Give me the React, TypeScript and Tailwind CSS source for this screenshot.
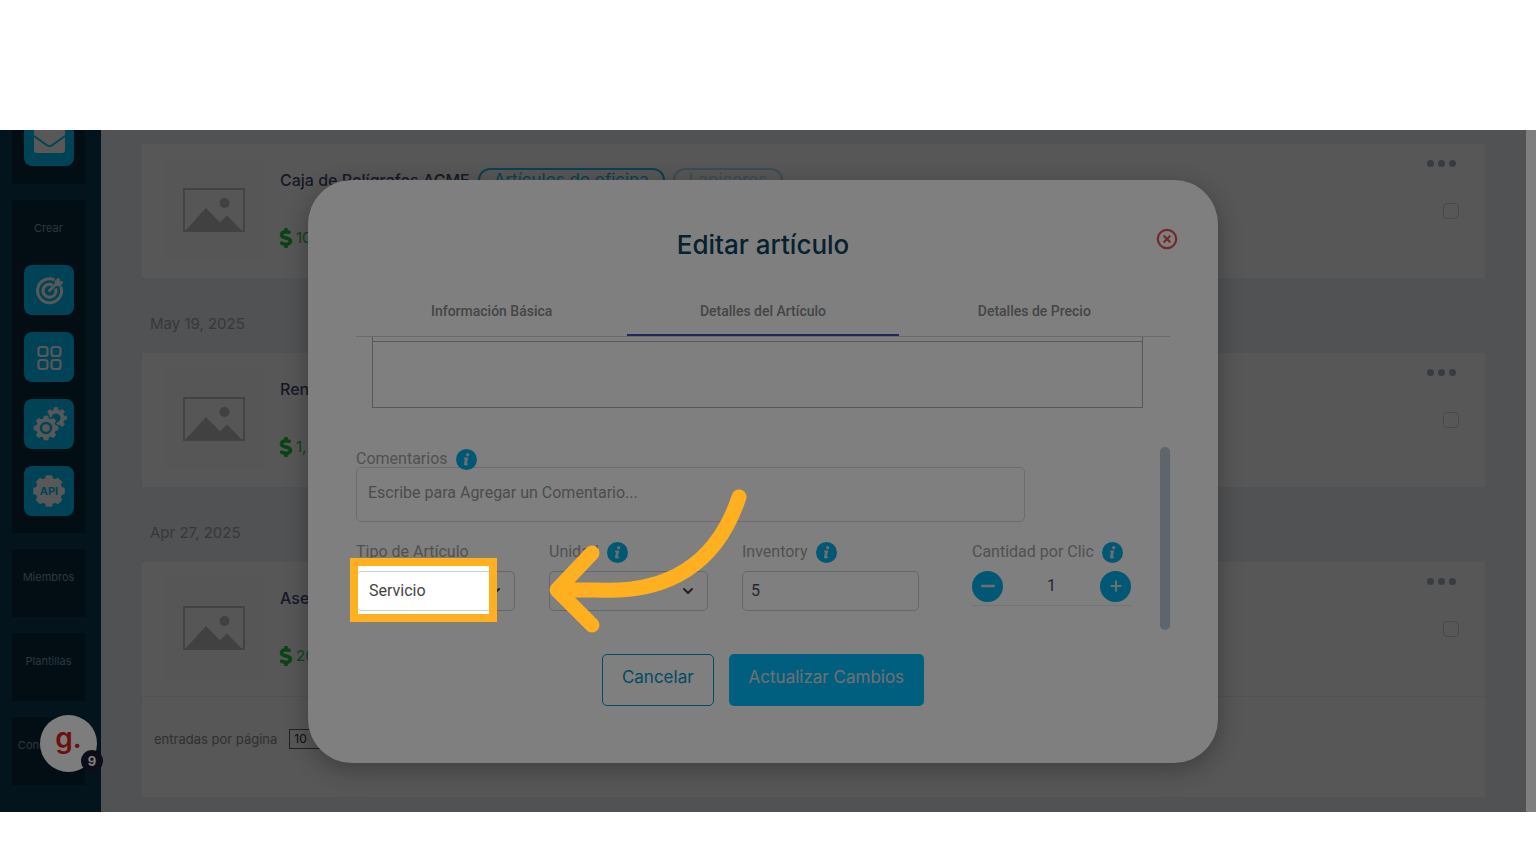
import type { ReactNode } from "react";
import { FaDollarSign } from "react-icons/fa6";
import { ChevronDown, CircleX, Minus, Plus } from "lucide-react";

// Outline of a cog: flat teeth around a body of radius r1
function cogPath(cx: number, cy: number, r1: number, r2: number, teeth: number) {
  const step = (Math.PI * 2) / teeth;
  const points: string[] = [];
  for (let i = 0; i < teeth; i++) {
    const a = i * step - Math.PI / 2;
    const corners = [
      [r1, -0.3],
      [r2, -0.2],
      [r2, 0.2],
      [r1, 0.3],
    ];
    for (const [r, k] of corners) {
      const t = a + k * step;
      points.push(`${(cx + r * Math.cos(t)).toFixed(2)} ${(cy + r * Math.sin(t)).toFixed(2)}`);
    }
  }
  return `M${points.join("L")}Z`;
}

function MailIcon() {
  return (
    <svg viewBox="0 0 50 50" className="size-full">
      <rect x="10" y="12" width="31" height="25" rx="3" fill="#b0b0b0" />
      <path d="M10 20l12.500 9q3 2.200 6 0l12.500-9" fill="none" stroke="#0086ad" strokeWidth="1.800" />
    </svg>
  );
}

function TargetIcon() {
  return (
    <svg viewBox="0 0 50 50" className="size-full" fill="none" stroke="#b0b0b0" strokeWidth="3">
      <path d="M30.500 14.800A12 12 0 1 0 36.800 21.500" />
      <path d="M28.500 20A6.500 6.500 0 1 0 31.600 23.500" />
      <path d="M25.500 25.500L34 17" strokeLinecap="round" />
      <path d="M31 16l4-3 .5 3.500 3.500.5-3 4-4-.5z" fill="#b0b0b0" strokeWidth="1" />
    </svg>
  );
}

function GridIcon() {
  return (
    <svg viewBox="0 0 50 50" className="size-full" fill="none" stroke="#b0b0b0" strokeWidth="2.200">
      <rect x="14.500" y="15" width="9" height="9" rx="2.500" />
      <rect x="27.500" y="15" width="9" height="9" rx="2.500" />
      <rect x="14.500" y="28" width="9" height="9" rx="2.500" />
      <rect x="27.500" y="28" width="9" height="9" rx="2.500" />
    </svg>
  );
}

function CogsIcon() {
  return (
    <svg viewBox="0 0 50 50" className="size-full" strokeLinejoin="round">
      <path d={cogPath(32, 19, 8, 10.5, 8)} fill="#b0b0b0" stroke="#b0b0b0" />
      <circle cx="32" cy="19" r="4.500" fill="#0086ad" />
      <path d={cogPath(22, 29, 10, 12.5, 8)} fill="#b0b0b0" stroke="#0086ad" strokeWidth="3" />
      <path d={cogPath(22, 29, 9.5, 12, 8)} fill="#b0b0b0" stroke="#b0b0b0" />
      <circle cx="22" cy="29" r="5" fill="#b0b0b0" stroke="#0086ad" strokeWidth="2.500" />
    </svg>
  );
}

function ApiIcon() {
  return (
    <svg viewBox="0 0 50 50" className="size-full" strokeLinejoin="round">
      <path d={cogPath(25, 25, 12.5, 15, 8)} fill="#b0b0b0" stroke="#b0b0b0" strokeWidth="2" />
      <text x="25" y="29" textAnchor="middle" fontFamily="Inter, sans-serif" fontSize="11" fontWeight="700" fill="#0086ad">
        API
      </text>
    </svg>
  );
}

function PlaceholderImage() {
  return (
    <svg viewBox="0 0 62 44" className="h-11 w-[62px]">
      <rect x="1" y="1" width="60" height="42" fill="none" stroke="#828282" strokeWidth="1.800" />
      <circle cx="41.500" cy="15" r="5" fill="#828282" />
      <path d="M2 43L23 20l14 14.500 7-7L59 43z" fill="#828282" />
    </svg>
  );
}

function SideButton({ label, children }: { label: string; children: ReactNode }) {
  return (
    <button type="button" aria-label={label} className="size-[50px] shrink-0 overflow-hidden rounded-lg bg-[#0086ad]">
      {children}
    </button>
  );
}

function SidePanel({ title }: { title: string }) {
  return (
    <section className="h-[68px] shrink-0 bg-[#051d28] pt-5 text-center text-[11px] leading-4 text-[#587080]">
      {title}
    </section>
  );
}

function Sidebar() {
  return (
    <aside className="flex w-[101px] shrink-0 flex-col gap-4 overflow-hidden bg-[#07293b] pr-4 pl-3">
      <section className="-mt-4 flex shrink-0 flex-col items-center bg-[#051d28] pt-[2px] pb-[18px]">
        <SideButton label="Correo">
          <MailIcon />
        </SideButton>
      </section>
      <section className="flex shrink-0 flex-col items-center gap-[17px] bg-[#051d28] pt-5 pb-[17px]">
        <h2 className="mb-3 text-[11px] leading-4 text-[#587080]">Crear</h2>
        <SideButton label="Objetivos">
          <TargetIcon />
        </SideButton>
        <SideButton label="Categorías">
          <GridIcon />
        </SideButton>
        <SideButton label="Configuración">
          <CogsIcon />
        </SideButton>
        <SideButton label="API">
          <ApiIcon />
        </SideButton>
      </section>
      <SidePanel title="Miembros" />
      <SidePanel title="Plantillas" />
      <SidePanel title="Conexiones" />
    </aside>
  );
}

type ItemProps = {
  name: string;
  price: string;
  tags?: ReactNode;
};

function Item({ name, price, tags }: ItemProps) {
  return (
    <article className="flex h-[134px] pr-[26px] pl-[22px]">
      <div className="mt-4 flex size-[100px] items-center justify-center bg-[#acacac]">
        <PlaceholderImage />
      </div>
      <div className="ml-4 flex-1 pt-6">
        <div className="flex h-6 items-center gap-2">
          <h3 className="text-[16px] font-medium text-[#2c3350]">{name}</h3>
          {tags}
        </div>
        <p className="mt-[34px] flex items-center text-[15px] leading-6 text-[#18862a]">
          <FaDollarSign className="-ml-1 size-5" stroke="currentColor" strokeWidth={28} />
          {price}
        </p>
      </div>
      <div className="flex flex-col items-end">
        <button type="button" aria-label="Más opciones" className="mt-[15px] mr-[3px] flex h-2 items-center gap-1 text-[#6d7b83]">
          <span className="size-[7px] rounded-full bg-current" />
          <span className="size-[7px] rounded-full bg-current" />
          <span className="size-[7px] rounded-full bg-current" />
        </button>
        <input
          type="checkbox"
          aria-label={`Seleccionar ${name}`}
          className="mt-9 size-4 appearance-none rounded-sm border border-[#929292]"
        />
      </div>
    </article>
  );
}

function DateHeading({ children }: { children: ReactNode }) {
  return <h2 className="flex h-[75px] items-center pt-4 pl-2 text-[15px] leading-6 text-[#6d7276]">{children}</h2>;
}

function ItemList() {
  return (
    <main className="min-w-0 flex-1 bg-[#a0a4a6] pt-[14px] pr-[41px] pl-[41px]">
      <div className="bg-[#aeaeae]">
        <Item
          name="Caja de Polígrafos ACME"
          price="10.00"
          tags={
            <>
              <span className="rounded-full border-2 border-[#1a7f9e] px-[14px] text-[17px] leading-5 text-[#1a7f9e]">
                Artículos de oficina
              </span>
              <span className="rounded-full border-2 border-[#7898a8] px-[14px] text-[17px] leading-5 text-[#7898a8]">
                Lapiceros
              </span>
            </>
          }
        />
      </div>
      <DateHeading>May 19, 2025</DateHeading>
      <div className="bg-[#aeaeae]">
        <Item name="Renta" price="1,200.00" />
      </div>
      <DateHeading>Apr 27, 2025</DateHeading>
      <div className="bg-[#aeaeae]">
        <Item name="Asesoría" price="200.00" />
        <div className="flex h-[101px] items-start gap-3 border-t border-[#a4a4a4] pt-8 pl-3">
          <label htmlFor="page-size" className="text-[13px] leading-5 text-[#606060]">
            entradas por página
          </label>
          <select id="page-size" className="h-5 w-12 appearance-none border border-[#444] pl-1 text-[12px] text-[#222]">
            <option>10</option>
          </select>
        </div>
      </div>
    </main>
  );
}

function InfoIcon() {
  return (
    <svg viewBox="0 0 21 21" className="size-[21px] shrink-0" aria-hidden="true">
      <circle cx="10.500" cy="10.500" r="10.500" fill="#00b0e8" />
      <circle cx="11.700" cy="5.700" r="1.600" fill="#ddd" />
      <path d="M8.300 8.600h4l-1.500 6h1.400l-.4 1.500q-2 .6-3.200.2-.9-.4-.6-1.600l1-4.500H7.900z" fill="#ddd" />
    </svg>
  );
}

// Dims the whole stage around the highlighted control
function Spotlight() {
  return (
    <div className="pointer-events-none absolute -top-[13px] -left-[6px] z-40 h-16 w-[147px] shadow-[0_0_0_2000px_rgba(0,0,0,0.5)]">
      <div className="size-full border-8 border-[#ffb020]" />
      <svg viewBox="0 0 210 150" className="absolute -top-[72px] left-[196px] h-[150px] w-[210px]" fill="none">
        <path
          d="M193 11C171 78 122 108 50 104L11 104M46 67L11 104L46 139"
          stroke="#ffb020"
          strokeWidth="15"
          strokeLinecap="round"
          strokeLinejoin="round"
        />
      </svg>
    </div>
  );
}

const labelClass = "flex h-[21px] items-center gap-2 text-[16px] text-[#a2a2a2]";
const fieldClass = "h-10 w-full appearance-none rounded-[5px] border border-[#c4d2da] bg-transparent text-[16px]";

function EditDialog() {
  return (
    <div
      role="dialog"
      aria-labelledby="dialog-title"
      className="relative w-[910px] max-w-full rounded-[44px] bg-white px-12 pb-[57px] font-['Roboto',sans-serif] shadow-[0_6px_24px_rgba(0,0,0,0.3)]"
    >
      <h1 id="dialog-title" className="pt-[47px] text-center font-['Inter',sans-serif] text-[26px] leading-9 font-medium text-[#0c4260]">
        Editar artículo
      </h1>
      <button type="button" aria-label="Cerrar" className="absolute top-12 right-10 text-[#e8505a]">
        <CircleX className="size-[22px]" strokeWidth={2.4} />
      </button>

      <div role="tablist" className="mt-[25px] grid grid-cols-3 border-b border-[#d4d4d4] text-[14px] font-medium text-[#8a8a8a]">
        <button type="button" role="tab" className="h-12">
          Información Básica
        </button>
        <button type="button" role="tab" aria-selected="true" className="h-12 border-b-2 border-[#3f51b5] pt-[2px]">
          Detalles del Artículo
        </button>
        <button type="button" role="tab" className="h-12">
          Detalles de Precio
        </button>
      </div>

      <div className="flex justify-between">
        <div className="w-[787px]">
          <div className="ml-4 h-[71px] border border-t-0 border-[#b0b0b0] pt-1">
            <textarea aria-label="Descripción" className="block h-full w-full resize-none border-t border-[#b0b0b0]" />
          </div>

          <label htmlFor="comments" className={`${labelClass} mt-[41px]`}>
            Comentarios <InfoIcon />
          </label>
          <textarea
            id="comments"
            placeholder="Escribe para Agregar un Comentario..."
            className="-mt-[3px] block h-[55px] w-[669px] resize-none rounded-[5px] border border-[#d4d8da] px-[11px] pt-[13px] text-[16px] placeholder:text-[#999]"
          />

          <div className="mt-5 flex">
            <div className="w-[159px]">
              <label htmlFor="type" className={labelClass}>
                Tipo de Artículo
              </label>
              <div className="relative mt-2">
                <select id="type" className={`${fieldClass} pl-3 text-[#444]`}>
                  <option>Servicio</option>
                </select>
                <ChevronDown className="absolute top-3 right-3 size-4 text-[#444]" strokeWidth={3} />
                <Spotlight />
              </div>
            </div>
            <div className="ml-[34px] w-[159px]">
              <label htmlFor="unit" className={labelClass}>
                Unidad <InfoIcon />
              </label>
              <div className="relative mt-2">
                <select id="unit" className={`${fieldClass} pl-3`}>
                  <option></option>
                </select>
                <ChevronDown className="absolute top-3 right-3 size-4 text-[#444]" strokeWidth={3} />
              </div>
            </div>
            <div className="ml-[34px] w-[177px]">
              <label htmlFor="inventory" className={labelClass}>
                Inventory <InfoIcon />
              </label>
              <input id="inventory" defaultValue="5" className={`${fieldClass} mt-2 pl-2 text-[#4a5068]`} />
            </div>
            <div className="ml-[53px] w-[159px]">
              <label htmlFor="quantity" className={labelClass}>
                Cantidad por Clic <InfoIcon />
              </label>
              <div className="mt-2 flex h-[35px] items-start justify-between border-b border-[#e4eaec]">
                <button type="button" aria-label="Restar" className="flex size-[31px] items-center justify-center rounded-full bg-[#00b0e8] text-[#ddd]">
                  <Minus className="size-5" strokeWidth={3} />
                </button>
                <input id="quantity" defaultValue="1" className="h-[30px] w-12 text-center text-[16px] text-[#4a5068]" />
                <button type="button" aria-label="Sumar" className="flex size-[31px] items-center justify-center rounded-full bg-[#00b0e8] text-[#ddd]">
                  <Plus className="size-4" strokeWidth={3} />
                </button>
              </div>
            </div>
          </div>
        </div>
        <div className="mt-[110px] h-[183px] w-[10px] rounded-full bg-[#bccad8]" />
      </div>

      <div className="mt-6 flex justify-center gap-[15px] font-['Inter',sans-serif] text-[17px]">
        <button type="button" className="h-[52px] rounded-[5px] border border-[#0096c8] px-[19px] pb-1 text-[#0096c8]">
          Cancelar
        </button>
        <button type="button" className="h-[52px] rounded-[5px] bg-[#00beff] px-5 pb-1 text-[#e0e0e0]">
          Actualizar Cambios
        </button>
      </div>
    </div>
  );
}

export default function App() {
  return (
    <div className="grid h-screen grid-rows-[130px_1fr_52px] bg-white font-['Inter',sans-serif]">
      <div />
      <div className="relative flex overflow-hidden">
        <Sidebar />
        <ItemList />
        <div className="w-[10px] shrink-0 bg-white" />

        {/* Help launcher */}
        <button
          type="button"
          aria-label="Ayuda"
          className="absolute bottom-10 left-10 size-[57px] rounded-full bg-[#fafafa] pb-3 text-[28px] leading-8 font-semibold text-[#d81c1c]"
        >
          g.
          <span className="absolute right-[-6px] bottom-0 size-[22px] rounded-full bg-[#1a1a30] text-[13px] leading-[22px] font-bold text-white">
            9
          </span>
        </button>

        <div className="absolute inset-y-0 right-[10px] left-0 flex items-center justify-center">
          <EditDialog />
        </div>
      </div>
      <div />
    </div>
  );
}
